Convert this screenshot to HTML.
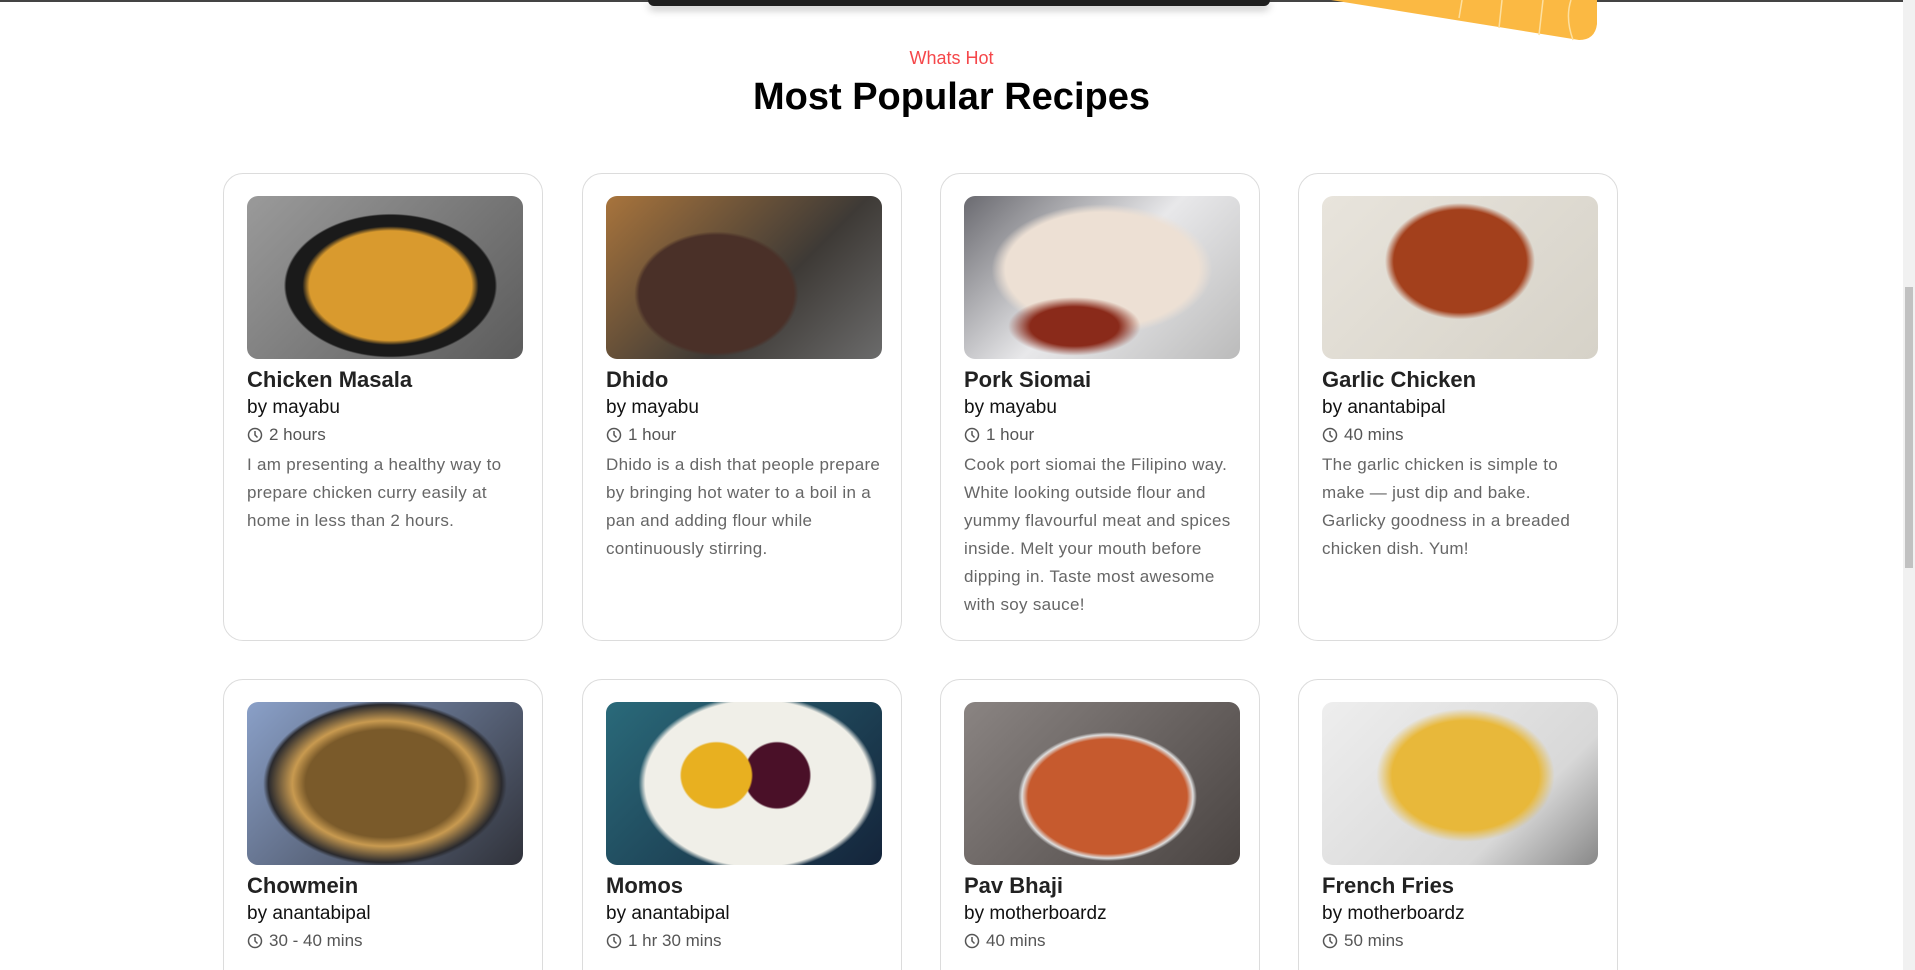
<!DOCTYPE html>
<html style="overflow:hidden;height:970px"><head><meta charset="utf-8"><style>
*{margin:0;padding:0;box-sizing:border-box}
body{width:1915px;height:970px;overflow:hidden;background:#fff;font-family:"Liberation Sans",sans-serif;position:relative}
.topline{position:absolute;left:0;top:0;width:1903px;height:2px;background:#444}
.bar{position:absolute;left:648px;top:0;width:622px;height:6px;background:#1e1e1e;border-radius:0 0 6px 6px;box-shadow:0 4px 8px rgba(0,0,0,.25)}
.sb{position:absolute;right:0;top:0;width:12px;height:970px;background:#f1f1f1}
.thumb{position:absolute;right:2px;top:287px;width:8px;height:281px;background:#c1c1c1}
.hot{position:absolute;left:0;width:1903px;top:48px;text-align:center;color:#f5474a;font-size:18px}
h1{position:absolute;left:0;width:1903px;top:76px;text-align:center;font-size:38px;font-weight:bold;color:#000;letter-spacing:0}
.card{position:absolute;width:320px;height:468px;border:1px solid #dcdcdc;border-radius:20px;background:#fff}
.r2{height:320px}
.img{position:absolute;left:23px;top:22px;width:276px;height:163px;border-radius:11px;overflow:hidden}
.t{position:absolute;left:23px;top:193px;font-size:22px;font-weight:bold;color:#222}
.by{position:absolute;left:23px;top:223px;font-size:19px;color:#111}
.tm{position:absolute;left:23px;top:251px;font-size:17px;color:#555;display:flex;align-items:center;gap:6px}
.d{position:absolute;left:23px;top:277px;width:276px;font-size:17px;letter-spacing:.3px;line-height:28px;color:#666}
</style></head><body>
<div class="topline"></div>
<div class="bar"></div>
<svg style="position:absolute;left:1331px;top:0" width="270" height="42"><path d="M0 0 L266 0 L266 24 Q264 40 248 40 Z" fill="#fbb943"/><path d="M131 0 L128 18 M171 0 L168 28 M212 0 L208 35 M240 0 Q234 18 242 40" stroke="#fde0a0" stroke-width="1.5" fill="none"/></svg>
<div class="sb"><div class="thumb"></div></div>
<div class="hot">Whats Hot</div>
<h1>Most Popular Recipes</h1>

<div class="card" style="left:223px;top:173px">
<div class="img" style="background:radial-gradient(ellipse 42% 48% at 52% 55%,#d99a2e 0 70%,#1a1a1a 76% 90%,transparent 92%),linear-gradient(135deg,#9a9a9a,#5c5c5c)"></div>
<div class="t">Chicken Masala</div><div class="by">by mayabu</div>
<div class="tm"><svg width="16" height="16"><circle cx="8" cy="8" r="6.5" fill="none" stroke="#555" stroke-width="1.5"/><path d="M8 4v4l2.5 2.5" stroke="#555" stroke-width="1.5" fill="none"/></svg>2 hours</div>
<div class="d">I am presenting a healthy way to prepare chicken curry easily at home in less than 2 hours.</div></div>

<div class="card" style="left:582px;top:173px">
<div class="img" style="background:radial-gradient(ellipse 35% 45% at 40% 60%,#4a3028 0 80%,transparent 85%),linear-gradient(135deg,#a8743c,#3e3a36 60%,#6b6b6b)"></div>
<div class="t">Dhido</div><div class="by">by mayabu</div>
<div class="tm"><svg width="16" height="16"><circle cx="8" cy="8" r="6.5" fill="none" stroke="#555" stroke-width="1.5"/><path d="M8 4v4l2.5 2.5" stroke="#555" stroke-width="1.5" fill="none"/></svg>1 hour</div>
<div class="d">Dhido is a dish that people prepare by bringing hot water to a boil in a pan and adding flour while continuously stirring.</div></div>

<div class="card" style="left:940px;top:173px">
<div class="img" style="background:radial-gradient(ellipse 40% 30% at 40% 80%,#8a2a1a 0 40%,transparent 60%),radial-gradient(ellipse 50% 50% at 50% 45%,#ede0d4 0 70%,transparent 80%),linear-gradient(135deg,#6a6a70,#e8e8ea 50%,#bbb)"></div>
<div class="t">Pork Siomai</div><div class="by">by mayabu</div>
<div class="tm"><svg width="16" height="16"><circle cx="8" cy="8" r="6.5" fill="none" stroke="#555" stroke-width="1.5"/><path d="M8 4v4l2.5 2.5" stroke="#555" stroke-width="1.5" fill="none"/></svg>1 hour</div>
<div class="d">Cook port siomai the Filipino way. White looking outside flour and yummy flavourful meat and spices inside. Melt your mouth before dipping in. Taste most awesome with soy sauce!</div></div>

<div class="card" style="left:1298px;top:173px">
<div class="img" style="background:radial-gradient(ellipse 32% 42% at 50% 40%,#a3401c 0 75%,transparent 85%),linear-gradient(135deg,#e8e4dc,#d6d2c8)"></div>
<div class="t">Garlic Chicken</div><div class="by">by anantabipal</div>
<div class="tm"><svg width="16" height="16"><circle cx="8" cy="8" r="6.5" fill="none" stroke="#555" stroke-width="1.5"/><path d="M8 4v4l2.5 2.5" stroke="#555" stroke-width="1.5" fill="none"/></svg>40 mins</div>
<div class="d">The garlic chicken is simple to make — just dip and bake. Garlicky goodness in a breaded chicken dish. Yum!</div></div>

<div class="card r2" style="left:223px;top:679px">
<div class="img" style="background:radial-gradient(ellipse 48% 55% at 50% 50%,#7a5a2a 0 60%,#c89a50 70%,#2a2a2e 88%,transparent 92%),linear-gradient(135deg,#8aa0c8,#30323a)"></div>
<div class="t">Chowmein</div><div class="by">by anantabipal</div>
<div class="tm"><svg width="16" height="16"><circle cx="8" cy="8" r="6.5" fill="none" stroke="#555" stroke-width="1.5"/><path d="M8 4v4l2.5 2.5" stroke="#555" stroke-width="1.5" fill="none"/></svg>30 - 40 mins</div></div>

<div class="card r2" style="left:582px;top:679px">
<div class="img" style="background:radial-gradient(ellipse 14% 22% at 40% 45%,#e8b020 0 90%,transparent 95%),radial-gradient(ellipse 13% 22% at 62% 45%,#4a1028 0 90%,transparent 95%),radial-gradient(ellipse 48% 60% at 55% 50%,#f0efe8 0 85%,transparent 90%),linear-gradient(135deg,#2a6a7a,#14243a)"></div>
<div class="t">Momos</div><div class="by">by anantabipal</div>
<div class="tm"><svg width="16" height="16"><circle cx="8" cy="8" r="6.5" fill="none" stroke="#555" stroke-width="1.5"/><path d="M8 4v4l2.5 2.5" stroke="#555" stroke-width="1.5" fill="none"/></svg>1 hr 30 mins</div></div>

<div class="card r2" style="left:940px;top:679px">
<div class="img" style="background:radial-gradient(ellipse 36% 44% at 52% 58%,#c65a2e 0 80%,#ddd 86%,transparent 90%),linear-gradient(135deg,#8a8482,#4a4442)"></div>
<div class="t">Pav Bhaji</div><div class="by">by motherboardz</div>
<div class="tm"><svg width="16" height="16"><circle cx="8" cy="8" r="6.5" fill="none" stroke="#555" stroke-width="1.5"/><path d="M8 4v4l2.5 2.5" stroke="#555" stroke-width="1.5" fill="none"/></svg>40 mins</div></div>

<div class="card r2" style="left:1298px;top:679px">
<div class="img" style="background:radial-gradient(ellipse 38% 48% at 52% 45%,#e8b83a 0 70%,transparent 85%),linear-gradient(135deg,#eee,#d8d8d8 70%,#888)"></div>
<div class="t">French Fries</div><div class="by">by motherboardz</div>
<div class="tm"><svg width="16" height="16"><circle cx="8" cy="8" r="6.5" fill="none" stroke="#555" stroke-width="1.5"/><path d="M8 4v4l2.5 2.5" stroke="#555" stroke-width="1.5" fill="none"/></svg>50 mins</div></div>
</body></html>
